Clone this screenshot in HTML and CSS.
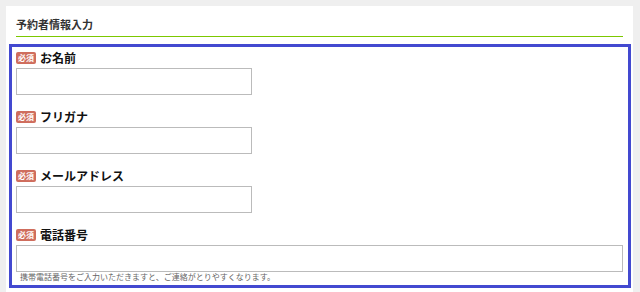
FILE: index.html
```html
<!DOCTYPE html>
<html lang="ja">
<head>
  <meta charset="UTF-8">
  <meta name="viewport" content="width=device-width, initial-scale=1.0">
  <title>予約者情報入力</title>
  <link rel="stylesheet" href="styles.css">
</head>
<body>

<div class="panel">
  <h2 class="panel-title">予約者情報入力</h2>

  <div class="form-box">
    <div class="field">
      <label class="field-label"><span class="badge">必須</span>お名前</label>
      <input type="text" class="text-input">
    </div>

    <div class="field">
      <label class="field-label"><span class="badge">必須</span>フリガナ</label>
      <input type="text" class="text-input">
    </div>

    <div class="field">
      <label class="field-label"><span class="badge">必須</span>メールアドレス</label>
      <input type="text" class="text-input">
    </div>

    <div class="field">
      <label class="field-label"><span class="badge">必須</span>電話番号</label>
      <input type="text" class="text-input wide">
      <p class="note">携帯電話番号をご入力いただきますと、ご連絡がとりやすくなります。</p>
    </div>
  </div>
</div>

</body>
</html>
```

FILE: styles.css
```css
body {
  margin: 0;
  padding: 6px 7px 0 6px;
  background-color: #efefef;
  font-family: "Noto Sans CJK JP", "Noto Sans", sans-serif;
  color: #111;
}

.panel {
  background-color: #fff;
  padding: 10px 0 4px 0;
}

.panel-title {
  margin: 0 10px 0 10px;
  padding-bottom: 4px;
  font-size: 11px;
  line-height: 16px;
  font-weight: bold;
  color: #333;
  border-bottom: 1px solid #7cc800;
}

.form-box {
  margin: 7px 2px 0 3px;
  border: 3px solid #4349d0;
  padding: 5px 5px 3px 4px;
}

.field {
  margin-bottom: 16px;
}

.field:last-child {
  margin-bottom: 0;
}

.field-label {
  display: flex;
  align-items: center;
  gap: 4px;
  height: 12px;
  margin-bottom: 4px;
  font-size: 12px;
  line-height: 12px;
  font-weight: bold;
}

.badge {
  display: inline-block;
  width: 20px;
  height: 12px;
  line-height: 12px;
  border-radius: 2px;
  background-color: #cf6d5d;
  color: #fff;
  font-size: 8px;
  font-weight: bold;
  text-align: center;
}

.text-input {
  display: block;
  box-sizing: border-box;
  width: 236px;
  height: 27px;
  margin: 0;
  border: 1px solid #bbb;
  background-color: #fff;
}

.text-input.wide {
  width: 100%;
}

.note {
  margin: 0;
  padding-left: 4px;
  font-size: 8px;
  line-height: 10px;
  color: #666;
}
```
